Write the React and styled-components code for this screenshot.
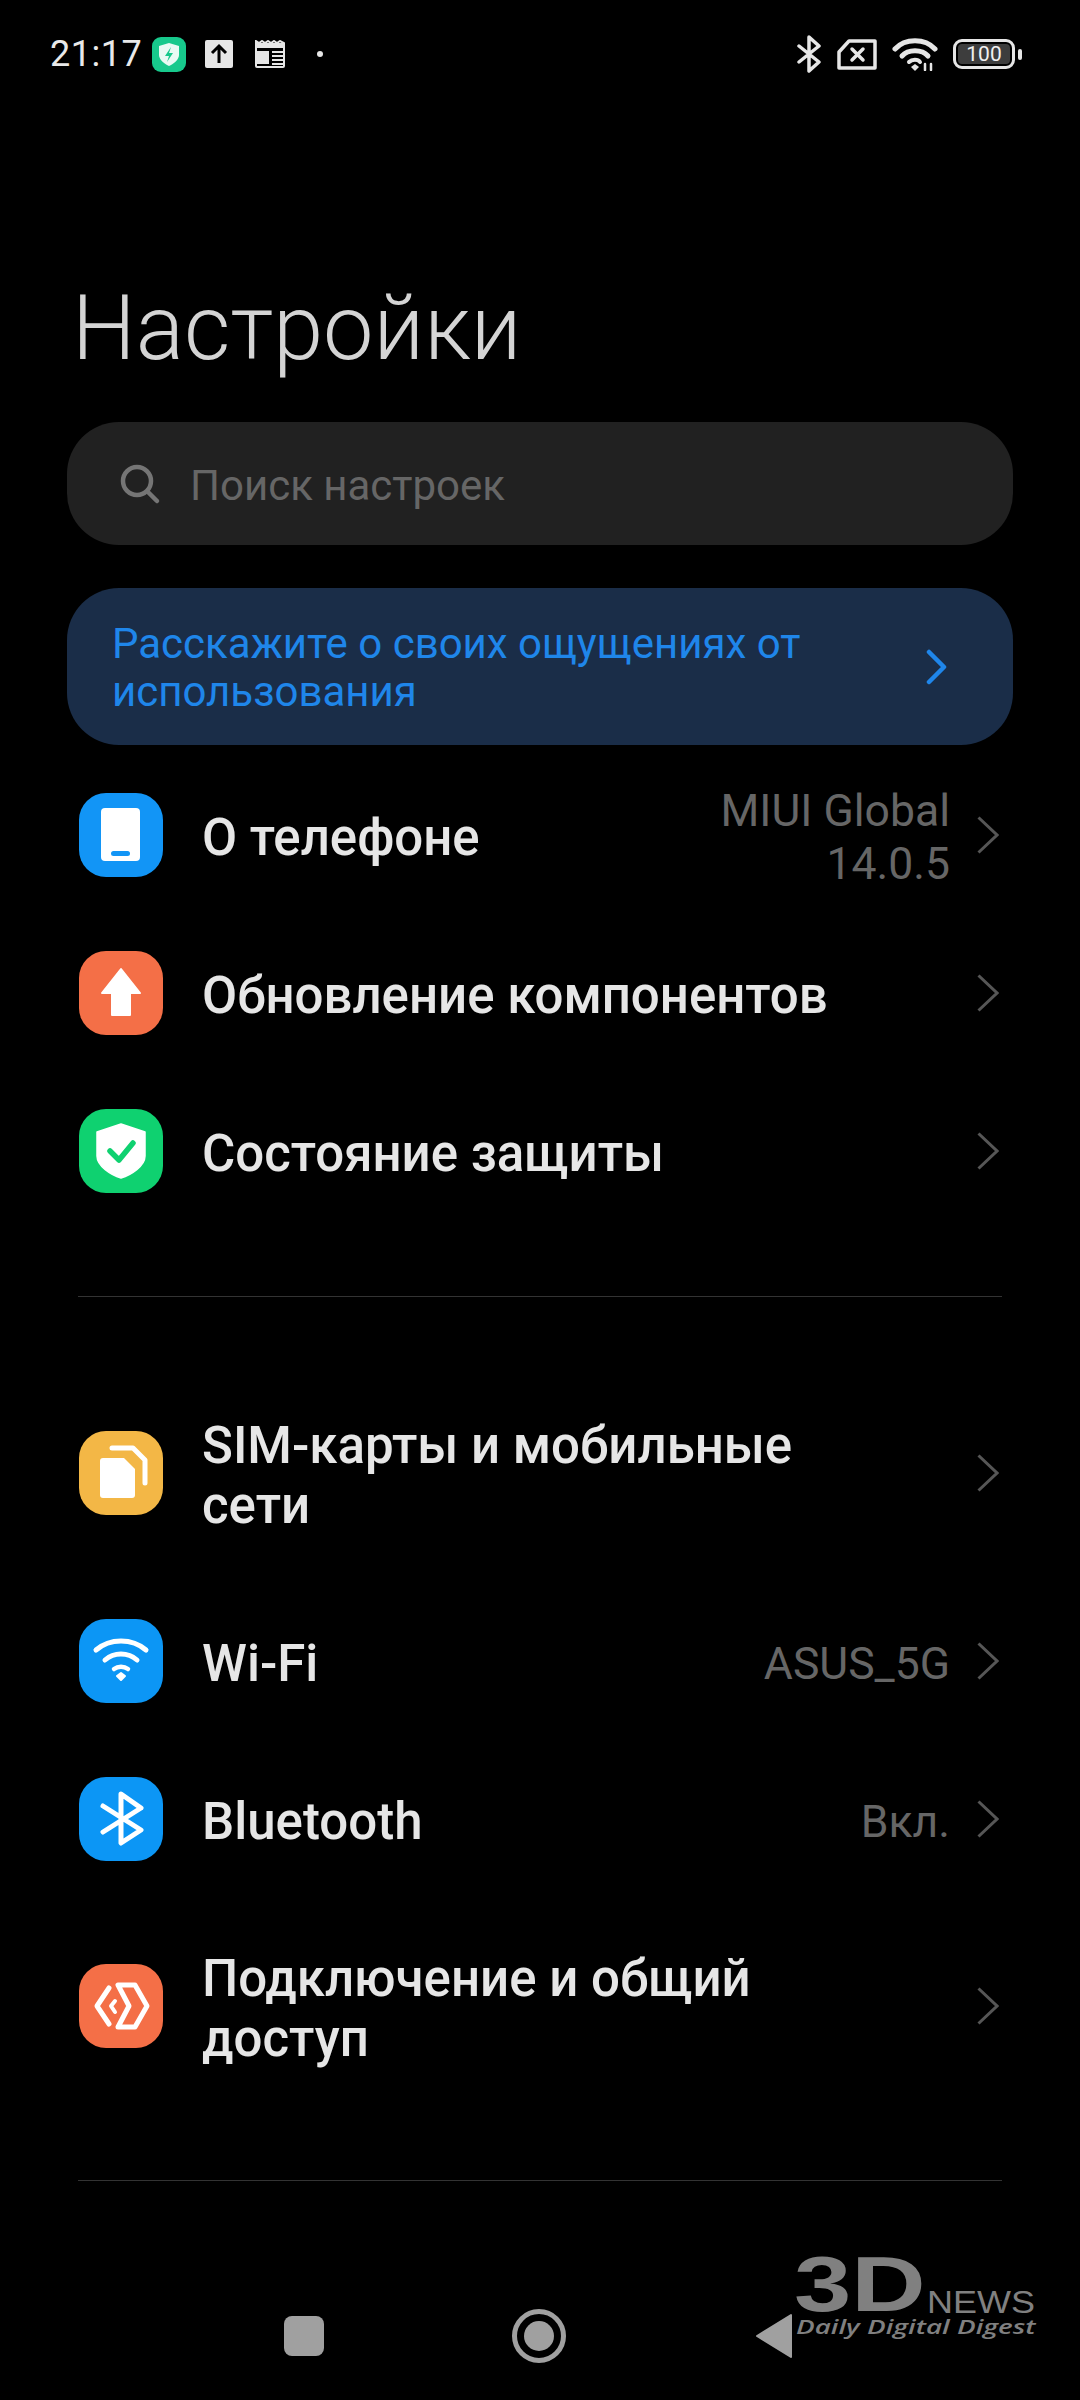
import styled, { createGlobalStyle } from 'styled-components'

const Global = createGlobalStyle`
  html, body {
    margin: 0;
    background: #000;
  }
  * {
    box-sizing: border-box;
  }
`

const Page = styled.div`
  position: relative;
  width: 1080px;
  height: 2400px;
  overflow: hidden;
  background: #000;
  font-family: Roboto, "Noto Sans", sans-serif;
  color: #e6e6e6;
`

const StatusBar = styled.div`
  display: flex;
  justify-content: space-between;
  align-items: center;
  height: 108px;
  padding: 0 58px 0 50px;
`
const StatusGroup = styled.div`
  display: flex;
  align-items: center;
`
const Clock = styled.span`
  font-size: 36px;
  letter-spacing: 0.5px;
  color: #e9e9e9;
  width: 102px;
`
const StatusIcon = styled.svg`
  display: block;
  flex: none;
  margin-left: ${(p) => p.$gap || 0}px;
`
const Battery = styled.div`
  display: flex;
  align-items: center;
  justify-content: center;
  width: 62px;
  height: 30px;
  margin-left: 15px;
  border: 3px solid #e6e6e6;
  border-radius: 9px;
  padding: 2px;
`
const BatteryFill = styled.div`
  width: 100%;
  height: 100%;
  border-radius: 4px;
  background: #3d3d3d;
  color: #f0f0f0;
  font-size: 21px;
  line-height: 20px;
  text-align: center;
`
const BatteryNub = styled.div`
  width: 4px;
  height: 11px;
  margin-left: 3px;
  border-radius: 2px;
  background: #e6e6e6;
`

const Title = styled.h1`
  margin: 0;
  padding: 161px 0 0 72px;
  height: 314px;
  font-size: 90px;
  line-height: 120px;
  font-weight: 300;
  color: #d4d4d4;
`

const Search = styled.div`
  display: flex;
  align-items: center;
  height: 123px;
  margin: 0 67px;
  padding: 0 0 0 52px;
  gap: 29px;
  border-radius: 52px;
  background: #212121;
  font-size: 42px;
  color: #666;
  span {
    padding-top: 4px;
  }
`

const Banner = styled.div`
  display: flex;
  align-items: center;
  justify-content: space-between;
  height: 157px;
  margin: 43px 67px 11px;
  padding: 0 65px 0 45px;
  border-radius: 52px;
  background: #1a2d48;
  color: #1f86ea;
  font-size: 42px;
  line-height: 48px;
  span {
    padding-top: 3px;
  }
`

const Row = styled.div`
  display: flex;
  align-items: center;
  min-height: ${(p) => p.$height}px;
  padding: 0 81px 0 79px;
`
const Tile = styled.div`
  display: flex;
  align-items: center;
  justify-content: center;
  flex: none;
  width: 84px;
  height: 84px;
  margin-right: 39px;
  border-radius: 27px;
  background: ${(p) => p.$color};
`
const RowTitle = styled.div`
  flex: 1;
  padding-top: 6px;
  font-size: 51px;
  line-height: 60px;
  font-weight: 500;
  color: #e6e6e6;
`
const RowValue = styled.div`
  margin-right: 27px;
  padding-top: 6px;
  font-size: 44.5px;
  line-height: 53px;
  text-align: right;
  color: #666;
`
const Divider = styled.div`
  height: 1px;
  margin: ${(p) => p.$mt}px 78px ${(p) => p.$mb}px;
  background: #333;
`

const NavBar = styled.div`
  display: grid;
  grid-template-columns: repeat(3, 235px);
  justify-content: start;
  align-items: center;
  justify-items: center;
  margin-top: 128px;
  padding-left: 186px;
`
const NavSquare = styled.div`
  width: 40px;
  height: 40px;
  border-radius: 8px;
  background: #a0a0a0;
`
const NavCircle = styled.div`
  display: flex;
  align-items: center;
  justify-content: center;
  width: 54px;
  height: 54px;
  border: 5px solid #a0a0a0;
  border-radius: 50%;
`
const NavDot = styled.div`
  width: 30px;
  height: 30px;
  border-radius: 50%;
  background: #a0a0a0;
`

const Watermark = styled.div`
  position: absolute;
  left: 794px;
  top: 2252px;
  width: 242px;
  color: #808080;
  font-family: "Liberation Sans", sans-serif;
`
const MarkTop = styled.div`
  display: flex;
  align-items: flex-end;
  height: 64px;
`
const MarkBig = styled.span`
  display: block;
  width: 133px;
  font-size: 78px;
  line-height: 64px;
  font-weight: 700;
  white-space: nowrap;
  transform: scaleX(1.32);
  transform-origin: left center;
`
const MarkNews = styled.span`
  display: block;
  font-size: 31px;
  line-height: 26px;
  white-space: nowrap;
  transform: scaleX(1.16);
  transform-origin: left center;
`
const MarkTag = styled.div`
  margin: 0 0 0 2px;
  font-family: "Open Sans", sans-serif;
  font-size: 20px;
  line-height: 22px;
  font-style: italic;
  font-weight: 600;
  white-space: nowrap;
  transform: scaleX(1.39);
  transform-origin: left center;
`

const RowChevron = () => (
  <svg width="22" height="38" viewBox="0 0 22 38" fill="none" style={{ flex: 'none' }}>
    <path d="M1.5 1.5 L20 19 L1.5 36.5" stroke="#565656" strokeWidth="3" />
  </svg>
)

const BannerChevron = () => (
  <svg width="22" height="36" viewBox="0 0 22 36" fill="none" style={{ flex: 'none' }}>
    <path d="M3 3 L18 18 L3 33" stroke="#1f86ea" strokeWidth="4.5" strokeLinecap="round" strokeLinejoin="round" />
  </svg>
)

const rows1 = [
  {
    title: 'О телефоне',
    value: (
      <>
        MIUI Global
        <br />
        14.0.5
      </>
    ),
    color: '#1295f6',
    icon: (
      <svg width="84" height="84" viewBox="0 0 84 84">
        <rect x="22" y="15" width="39" height="53" rx="4" fill="#fff" />
        <rect x="32" y="58" width="19" height="5" rx="2.5" fill="#1295f6" />
      </svg>
    ),
  },
  {
    title: 'Обновление компонентов',
    color: '#f46f47',
    icon: (
      <svg width="84" height="84" viewBox="0 0 84 84">
        <path d="M42 18 L61 42 H51 V64 H33 V42 H23 Z" fill="#fff" stroke="#fff" strokeWidth="2" strokeLinejoin="round" />
      </svg>
    ),
  },
  {
    title: 'Состояние защиты',
    color: '#0fd170',
    icon: (
      <svg width="84" height="84" viewBox="0 0 84 84">
        <path d="M42 15 L66 23 V47 C66 57 52 66 42 69 C32 66 18 57 18 47 V23 Z" fill="#fff" stroke="#fff" strokeWidth="1.5" strokeLinejoin="round" />
        <path d="M31 42 L40 51 L54 34" fill="none" stroke="#0fd170" strokeWidth="5.5" strokeLinecap="round" strokeLinejoin="round" />
      </svg>
    ),
  },
]

const rows2 = [
  {
    title: (
      <>
        SIM-карты и мобильные
        <br />
        сети
      </>
    ),
    height: 218,
    color: '#f3b746',
    icon: (
      <svg width="84" height="84" viewBox="0 0 84 84">
        <path d="M21 30 Q21 27 24 27 H45 L56 38 V64 Q56 67 53 67 H24 Q21 67 21 64 Z" fill="#fff" />
        <path d="M33 17 H54 L66 29 V52" fill="none" stroke="#fff" strokeWidth="5" strokeLinecap="round" strokeLinejoin="round" />
      </svg>
    ),
  },
  {
    title: 'Wi-Fi',
    value: 'ASUS_5G',
    color: '#0c96f5',
    icon: (
      <svg width="84" height="84" viewBox="0 0 84 84" fill="none" stroke="#fff" strokeLinecap="round">
        <path d="M17 31 C31 19 53 19 67 31" strokeWidth="5" />
        <path d="M26 41 C35 33 49 33 58 41" strokeWidth="5" />
        <path d="M35 50 C39 47 45 47 49 50" strokeWidth="4.5" />
        <path d="M38 57 L42 54 L46 57 L42 61 Z" fill="#fff" strokeWidth="2" strokeLinejoin="round" />
      </svg>
    ),
  },
  {
    title: 'Bluetooth',
    value: 'Вкл.',
    color: '#0c96f5',
    icon: (
      <svg width="84" height="84" viewBox="0 0 84 84" fill="none" stroke="#fff" strokeWidth="5" strokeLinecap="round" strokeLinejoin="round">
        <path d="M24 29 L62 53 L42 66 V17 L62 31 L24 55" />
      </svg>
    ),
  },
  {
    title: (
      <>
        Подключение и общий
        <br />
        доступ
      </>
    ),
    height: 216,
    color: '#f46f47',
    icon: (
      <svg width="84" height="84" viewBox="0 0 84 84" fill="none" stroke="#fff" strokeLinecap="round" strokeLinejoin="round">
        <path d="M30 24 L18 42 L30 60" strokeWidth="5" />
        <path d="M36 37 L32 42 L36 48" strokeWidth="4" />
        <path d="M39 21 H56 L68 42 L56 63 H39 L50 42 Z" strokeWidth="5" />
      </svg>
    ),
  },
]

const SettingsRow = ({ item }) => (
  <Row $height={item.height || 158}>
    <Tile $color={item.color}>{item.icon}</Tile>
    <RowTitle>{item.title}</RowTitle>
    {item.value && <RowValue>{item.value}</RowValue>}
    <RowChevron />
  </Row>
)

export default function App() {
  return (
    <Page>
      <Global />
      <StatusBar>
        <StatusGroup>
          <Clock>21:17</Clock>
          <StatusIcon width="34" height="35" viewBox="0 0 34 35">
            <rect width="34" height="35" rx="9" fill="#17c98c" />
            <path d="M17 6 L27 9 V18 C27 23 21 27 17 29 C13 27 7 23 7 18 V9 Z" fill="#e9faf4" />
            <path d="M19 10 L13 19 H17 L15 25 L21 16 H17 Z" fill="#17c98c" />
          </StatusIcon>
          <StatusIcon $gap={19} width="28" height="28" viewBox="0 0 28 28">
            <rect width="28" height="28" rx="2" fill="#e6e6e6" />
            <path d="M14 23 V6 M7 13 L14 6 L21 13" fill="none" stroke="#000" strokeWidth="3" />
          </StatusIcon>
          <StatusIcon $gap={22} width="30" height="28" viewBox="0 0 30 28">
            <path d="M1 1 L4 3 L7 1 L10 3 L13 1 L16 3 L19 1 L22 3 L25 1 L29 3 V26 Q29 27 28 27 H2 Q1 27 1 26 Z" fill="none" stroke="#e6e6e6" strokeWidth="2" />
            <path d="M1 3 H29 V8 H1 Z M2 11 H14 V24 H2 Z" fill="#e6e6e6" />
            <path d="M17 12 H28 M17 16 H28 M17 20 H28 M17 24 H28" stroke="#e6e6e6" strokeWidth="2" />
          </StatusIcon>
          <StatusIcon $gap={32} width="6" height="6" viewBox="0 0 6 6">
            <circle cx="3" cy="3" r="3" fill="#e6e6e6" />
          </StatusIcon>
        </StatusGroup>
        <StatusGroup>
          <StatusIcon width="24" height="38" viewBox="0 0 24 38" fill="none" stroke="#e6e6e6" strokeWidth="3.5" strokeLinecap="round" strokeLinejoin="round">
            <path d="M2 11 L22 27 L12 36 V2 L22 11 L2 27" />
          </StatusIcon>
          <StatusIcon $gap={16} width="40" height="31" viewBox="0 0 40 31" fill="none" stroke="#e6e6e6" strokeWidth="3.5" strokeLinejoin="round">
            <path d="M2 13 L12 2 H38 V29 H2 Z" />
            <path d="M15 10 L26 21 M26 10 L15 21" strokeLinecap="round" />
          </StatusIcon>
          <StatusIcon $gap={15} width="46" height="34" viewBox="0 0 46 34" fill="none" stroke="#e6e6e6" strokeWidth="5" strokeLinecap="round">
            <path d="M3 12 C13 1 33 1 43 12" />
            <path d="M10 19 C16 12 30 12 36 19" />
            <path d="M17 25 C20 22 26 22 28 25" strokeWidth="4" />
            <path d="M19 30 L23 27 L27 30 L23 34 Z" fill="#e6e6e6" stroke="none" />
            <path d="M33 33 V27 M39 27 V33" strokeWidth="2.5" />
          </StatusIcon>
          <Battery>
            <BatteryFill>100</BatteryFill>
          </Battery>
          <BatteryNub />
        </StatusGroup>
      </StatusBar>

      <Title>Настройки</Title>

      <Search>
        <svg width="42" height="42" viewBox="0 0 42 42" fill="none" stroke="#757575" strokeWidth="4.5" strokeLinecap="round">
          <circle cx="18" cy="18" r="14" />
          <path d="M29 29 L38 38" />
        </svg>
        <span>Поиск настроек</span>
      </Search>

      <Banner>
        <span>
          Расскажите о своих ощущениях от
          <br />
          использования
        </span>
        <BannerChevron />
      </Banner>

      {rows1.map((item) => (
        <SettingsRow key={item.color} item={item} />
      ))}
      <Divider $mt={66} $mb={67} />
      {rows2.map((item, i) => (
        <SettingsRow key={i} item={item} />
      ))}
      <Divider $mt={66} $mb={0} />

      <NavBar>
        <NavSquare />
        <NavCircle>
          <NavDot />
        </NavCircle>
        <svg width="38" height="46" viewBox="0 0 38 46">
          <path d="M36 2 V44 L2 23 Z" fill="#a0a0a0" stroke="#a0a0a0" strokeWidth="2" strokeLinejoin="round" />
        </svg>
      </NavBar>

      <Watermark>
        <MarkTop>
          <MarkBig>3D</MarkBig>
          <MarkNews>NEWS</MarkNews>
        </MarkTop>
        <MarkTag>Daily Digital Digest</MarkTag>
      </Watermark>
    </Page>
  )
}
